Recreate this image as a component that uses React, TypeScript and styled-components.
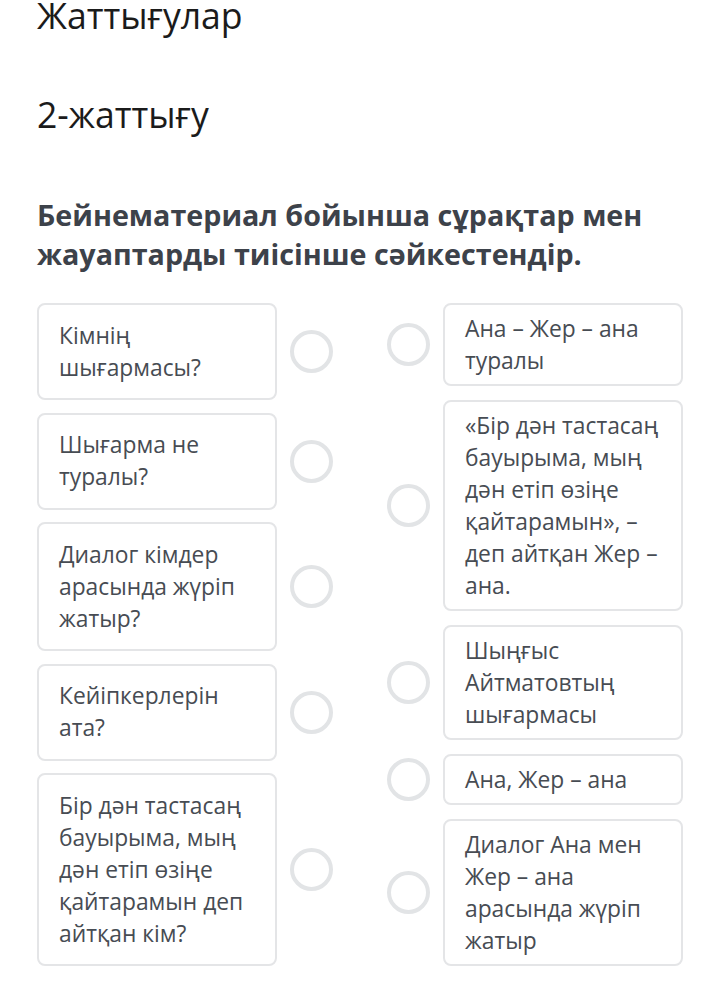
import React from 'react';
import styled, { createGlobalStyle } from 'styled-components';

const GlobalStyle = createGlobalStyle`
  body {
    margin: 0;
    background: #ffffff;
    font-family: "Open Sans", "Noto Sans", sans-serif;
  }
`;

const Page = styled.div`
  padding: 0 37px;
  width: 720px;
  box-sizing: border-box;
`;

const SectionTitle = styled.h1`
  margin: -5px 0 0;
  font-size: 35.6px;
  line-height: 40px;
  font-weight: 400;
  color: #1b1b1b;
`;

const ExerciseTitle = styled.h2`
  margin: 59px 0 0;
  font-size: 35.6px;
  line-height: 40px;
  font-weight: 400;
  color: #1b1b1b;
`;

const Prompt = styled.p`
  margin: 61px 0 0;
  font-size: 28.7px;
  line-height: 39px;
  font-weight: 700;
  color: #3d424a;
`;

const Board = styled.div`
  margin-top: 30px;
  display: grid;
  grid-template-columns: 296px 296px;
  justify-content: space-between;
  padding-bottom: 29px;
`;

const Column = styled.div<{ $gap: number }>`
  display: flex;
  flex-direction: column;
  gap: ${(p) => p.$gap}px;
`;

const Row = styled.div`
  display: flex;
  align-items: center;
  gap: 13px;
`;

const Card = styled.div<{ $pad: number }>`
  width: 240px;
  box-sizing: border-box;
  border: 2px solid #e4e5e7;
  border-radius: 8px;
  padding: ${(p) => p.$pad}px 16px ${(p) => p.$pad}px 20px;
  font-size: 22.8px;
  line-height: 32px;
  color: #474c53;
`;

const Dot = styled.span`
  flex: none;
  width: 43px;
  height: 43px;
  box-sizing: border-box;
  border: 4px solid #e2e4e6;
  border-radius: 50%;
`;

const questions = [
  ['Кімнің', 'шығармасы?'],
  ['Шығарма не', 'туралы?'],
  ['Диалог кімдер', 'арасында жүріп', 'жатыр?'],
  ['Кейіпкерлерін', 'ата?'],
  ['Бір дән тастасаң', 'бауырыма, мың', 'дән етіп өзіңе', 'қайтарамын деп', 'айтқан кім?'],
];

const answers = [
  ['Ана – Жер – ана', 'туралы'],
  ['«Бір дән тастасаң', 'бауырыма, мың', 'дән етіп өзіңе', 'қайтарамын», –', 'деп айтқан Жер –', 'ана.'],
  ['Шыңғыс', 'Айтматовтың', 'шығармасы'],
  ['Ана, Жер – ана'],
  ['Диалог Ана мен', 'Жер – ана', 'арасында жүріп', 'жатыр'],
];

const Lines: React.FC<{ lines: string[] }> = ({ lines }) => (
  <>
    {lines.map((l, i) => (
      <React.Fragment key={i}>
        {i > 0 && <br />}
        {l}
      </React.Fragment>
    ))}
  </>
);

const App: React.FC = () => {
  return (
    <Page>
      <GlobalStyle />
      <SectionTitle>Жаттығулар</SectionTitle>
      <ExerciseTitle>2-жаттығу</ExerciseTitle>
      <Prompt>
        Бейнематериал бойынша сұрақтар мен
        <br />
        жауаптарды тиісінше сәйкестендір.
      </Prompt>
      <Board>
        <Column $gap={12.5}>
          {questions.map((q, i) => (
            <Row key={i}>
              <Card $pad={14.5}>
                <Lines lines={q} />
              </Card>
              <Dot />
            </Row>
          ))}
        </Column>
        <Column $gap={14}>
          {answers.map((a, i) => (
            <Row key={i}>
              <Dot />
              <Card $pad={7.5}>
                <Lines lines={a} />
              </Card>
            </Row>
          ))}
        </Column>
      </Board>
    </Page>
  );
};

export default App;
